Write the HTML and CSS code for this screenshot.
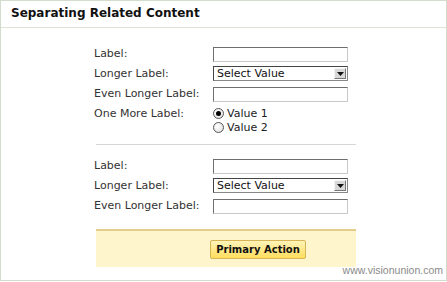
FILE: index.html
```html
<!DOCTYPE html>
<html lang="en">
<head>
  <meta charset="UTF-8">
  <title>Separating Related Content</title>
  <link rel="stylesheet" href="styles.css">
</head>
<body>

  <div class="panel">
    <h1 class="panel-head">Separating Related Content</h1>

    <div class="panel-body">
      <form class="form">
        <div class="group">
          <label class="label">Label:</label>
          <input class="field" type="text">

          <label class="label">Longer Label:</label>
          <div class="select">
            <span class="select-text">Select Value</span>
            <span class="select-arrow">
              <svg width="7" height="4" viewBox="0 0 7 4"><path d="M0 0h7L3.5 4z" fill="#111"/></svg>
            </span>
          </div>

          <label class="label">Even Longer Label:</label>
          <input class="field" type="text">

          <label class="label">One More Label:</label>
          <div class="radios">
            <div class="radio-row"><span class="radio checked"></span>Value 1</div>
            <div class="radio-row"><span class="radio"></span>Value 2</div>
          </div>
        </div>

        <div class="divider"></div>

        <div class="group">
          <label class="label">Label:</label>
          <input class="field" type="text">

          <label class="label">Longer Label:</label>
          <div class="select">
            <span class="select-text">Select Value</span>
            <span class="select-arrow">
              <svg width="7" height="4" viewBox="0 0 7 4"><path d="M0 0h7L3.5 4z" fill="#111"/></svg>
            </span>
          </div>

          <label class="label">Even Longer Label:</label>
          <input class="field" type="text">
        </div>

        <div class="actions">
          <button type="submit" class="primary">Primary Action</button>
        </div>
      </form>
    </div>

    <div class="credit">www.visionunion.com</div>
  </div>

</body>
</html>
```

FILE: styles.css
```css
body {
  margin: 0;
  background-color: #fff;
  font-family: "DejaVu Sans", Verdana, sans-serif;
  color: #222;
}

.panel {
  box-sizing: border-box;
  width: 447px;
  height: 281px;
  border: 1px solid #d3dbcb;
  background-color: #fff;
}

.panel-head {
  box-sizing: border-box;
  height: 27px;
  margin: 0;
  padding: 5px 0 0 10px;
  font-size: 12px;
  font-weight: bold;
  color: #111;
  border-bottom: 1px solid #dde3d5;
}

.panel-body {
  padding: 18px 0 0 93px;
}

.form {
  width: 262px;
}

.group {
  display: grid;
  grid-template-columns: 119px 135px;
  grid-auto-rows: minmax(20px, auto);
  align-items: start;
}

.label {
  font-size: 11px;
  line-height: 16px;
  color: #333;
}

.field {
  box-sizing: border-box;
  width: 135px;
  height: 15px;
  margin: 1px 0 0;
  padding: 0;
  border: 1px solid #c9c9c9;
  border-top-color: #6f6f6f;
  border-left-color: #6f6f6f;
  background-color: #fff;
}

.select {
  box-sizing: border-box;
  display: flex;
  align-items: center;
  justify-content: space-between;
  width: 135px;
  height: 15px;
  margin-top: 0;
  padding: 0 1px 0 3px;
  border: 1px solid #444;
  border-right-color: #888;
  border-bottom-color: #888;
  font-size: 11px;
  color: #111;
}

.select-text {
  line-height: 13px;
}

.select-arrow {
  box-sizing: border-box;
  display: flex;
  align-items: center;
  justify-content: center;
  width: 12px;
  height: 11px;
  background-color: #d8d8d8;
  border: 1px solid #f4f4f4;
  border-right-color: #777;
  border-bottom-color: #777;
}

.radios {
  font-size: 11px;
  color: #222;
}

.radio-row {
  display: flex;
  align-items: center;
  gap: 3px;
  height: 14px;
}

.radio {
  box-sizing: border-box;
  display: inline-flex;
  align-items: center;
  justify-content: center;
  width: 11px;
  height: 11px;
  border: 1px solid #555;
  border-radius: 50%;
  background: radial-gradient(circle at 35% 35%, #fff, #ddd);
}

.radio.checked::after {
  content: "";
  width: 5px;
  height: 5px;
  border-radius: 50%;
  background-color: #000;
}

.divider {
  height: 1px;
  margin: 10px 0 13px 2px;
  background-color: #d6d6d6;
}

.actions {
  box-sizing: border-box;
  display: flex;
  align-items: center;
  height: 38px;
  margin: 11px 0 0 2px;
  width: 260px;
  padding: 1px 0 0 114px;
  background-color: #fef5cc;
  border-top: 2px solid #e3cc8c;
}

.primary {
  box-sizing: border-box;
  width: 96px;
  height: 19px;
  padding: 0;
  font-family: "DejaVu Sans", Verdana, sans-serif;
  font-size: 10px;
  font-weight: bold;
  color: #111;
  background: linear-gradient(#fff4b8, #ffdd5c);
  border: 1px solid #d7b556;
  border-radius: 2px;
  cursor: pointer;
}

.credit {
  margin: 0 3px 0 0;
  text-align: right;
  font-family: "Liberation Sans", Arial, sans-serif;
  font-size: 10.5px;
  line-height: 6px;
  color: #8a8a8a;
}
```
